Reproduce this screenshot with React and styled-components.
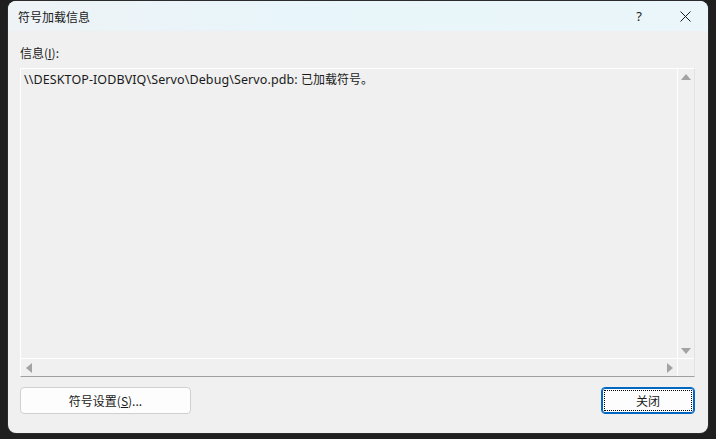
import React from 'react';
import styled, { createGlobalStyle } from 'styled-components';

const GlobalStyle = createGlobalStyle`
  html, body {
    margin: 0;
    padding: 0;
    background: #1f1f1f;
    font-family: 'Noto Sans', 'Noto Sans CJK SC', sans-serif;
  }
  #root {
    width: 716px;
    height: 439px;
    overflow: hidden;
  }
`;

const Desk = styled.div`
  width: 716px;
  height: 439px;
  padding: 1px 8px 0 8px;
  box-sizing: border-box;
  background: #1f1f1f;
`;

const Window = styled.div`
  width: 700px;
  height: 432px;
  background: #f0f0f0;
  border-radius: 8px;
  overflow: hidden;
  display: flex;
  flex-direction: column;
  box-shadow: 0 0 0 1px #2b2b2b;
`;

const TitleBar = styled.div`
  height: 30px;
  display: flex;
  align-items: center;
  padding-left: 10px;
  background: linear-gradient(90deg, #eef3f6 0%, #e8f5fa 40%, #eaf6f9 100%);
  font-size: 12px;
  color: #1a1a1a;
`;

const Title = styled.div`
  flex: 1;
  font-family: 'Noto Sans CJK SC', sans-serif;
`;

const CaptionButton = styled.div`
  width: 46px;
  height: 30px;
  display: flex;
  align-items: center;
  justify-content: center;
  color: #1a1a1a;
  font-size: 13px;
`;

const Body = styled.div`
  flex: 1;
  display: flex;
  flex-direction: column;
  padding: 13px 13px 18px 12px;
  font-size: 12px;
  color: #1a1a1a;
`;

const Label = styled.div`
  height: 17px;
  line-height: 17px;
  margin-bottom: 7px;
  font-family: 'Noto Sans CJK SC', sans-serif;
  & u {
    text-decoration: underline;
  }
`;

const TextBox = styled.div`
  height: 309px;
  display: grid;
  grid-template-columns: 1fr 17px;
  grid-template-rows: 1fr 18px;
  border-top: 1px solid #ffffff;
  border-left: 1px solid #ffffff;
  border-right: 1px solid #e3e3e3;
  border-bottom: 1px solid #a0a0a0;
  box-sizing: border-box;
`;

const TextArea = styled.div`
  padding: 2px 3px;
  line-height: 16px;
  white-space: nowrap;
  font-family: 'Noto Sans CJK SC', sans-serif;
`;

const Path = styled.span`
  font-family: 'Noto Sans', sans-serif;
  font-size: 12.5px;
  letter-spacing: 0.1px;
`;

const VScroll = styled.div`
  border-left: 1px solid #ffffff;
  display: flex;
  flex-direction: column;
  justify-content: space-between;
  align-items: center;
  padding: 5px 0 4px;
`;

const HScroll = styled.div`
  border-top: 1px solid #ffffff;
  display: flex;
  justify-content: space-between;
  align-items: center;
  padding: 0 4px 0 5px;
`;

const Corner = styled.div`
  border-top: 1px solid #ffffff;
  border-left: 1px solid #ffffff;
`;

const Arrow = styled.div`
  width: 0;
  height: 0;
  ${({ dir }) =>
    dir === 'up'
      ? 'border-left: 5px solid transparent; border-right: 5px solid transparent; border-bottom: 6px solid #a3a3a3;'
      : dir === 'down'
      ? 'border-left: 5px solid transparent; border-right: 5px solid transparent; border-top: 6px solid #a3a3a3;'
      : dir === 'left'
      ? 'border-top: 5px solid transparent; border-bottom: 5px solid transparent; border-right: 6px solid #a3a3a3;'
      : 'border-top: 5px solid transparent; border-bottom: 5px solid transparent; border-left: 6px solid #a3a3a3;'}
`;

const Footer = styled.div`
  display: flex;
  justify-content: space-between;
  margin-top: 10px;
`;

const Button = styled.button`
  height: 27px;
  width: ${({ w }) => w}px;
  background: #fdfdfd;
  border: 1px solid ${({ primary }) => (primary ? '#0067c0' : '#d0d0d0')};
  border-radius: 4px;
  font-family: 'Noto Sans CJK SC', sans-serif;
  font-size: 12px;
  color: #1a1a1a;
  padding: 2px;
  box-sizing: border-box;
  ${({ primary }) => primary && 'box-shadow: inset 0 0 0 1px #0067c0;'}
`;

const Focus = styled.span`
  display: flex;
  align-items: center;
  justify-content: center;
  height: 100%;
  box-sizing: border-box;
  border: 1px dotted #000;
`;

const Plain = styled.span`
  display: flex;
  align-items: center;
  justify-content: center;
  height: 100%;
`;

const CloseIcon = () => (
  <svg width="11" height="11" viewBox="0 0 11 11">
    <path d="M0.5 0.5 L10.5 10.5 M10.5 0.5 L0.5 10.5" stroke="#1a1a1a" strokeWidth="1" />
  </svg>
);

const App = () => (
  <Desk>
    <GlobalStyle />
    <Window>
      <TitleBar>
        <Title>符号加载信息</Title>
        <CaptionButton>?</CaptionButton>
        <CaptionButton>
          <CloseIcon />
        </CaptionButton>
      </TitleBar>
      <Body>
        <Label>
          信息(<u>I</u>):
        </Label>
        <TextBox>
          <TextArea>
            <Path>\\DESKTOP-IODBVIQ\Servo\Debug\Servo.pdb: </Path>已加载符号。
          </TextArea>
          <VScroll>
            <Arrow dir="up" />
            <Arrow dir="down" />
          </VScroll>
          <HScroll>
            <Arrow dir="left" />
            <Arrow dir="right" />
          </HScroll>
          <Corner />
        </TextBox>
        <Footer>
          <Button w={171}>
            <Plain>
              符号设置(<u>S</u>)...
            </Plain>
          </Button>
          <Button w={94} primary>
            <Focus>关闭</Focus>
          </Button>
        </Footer>
      </Body>
    </Window>
  </Desk>
);

export default App;
